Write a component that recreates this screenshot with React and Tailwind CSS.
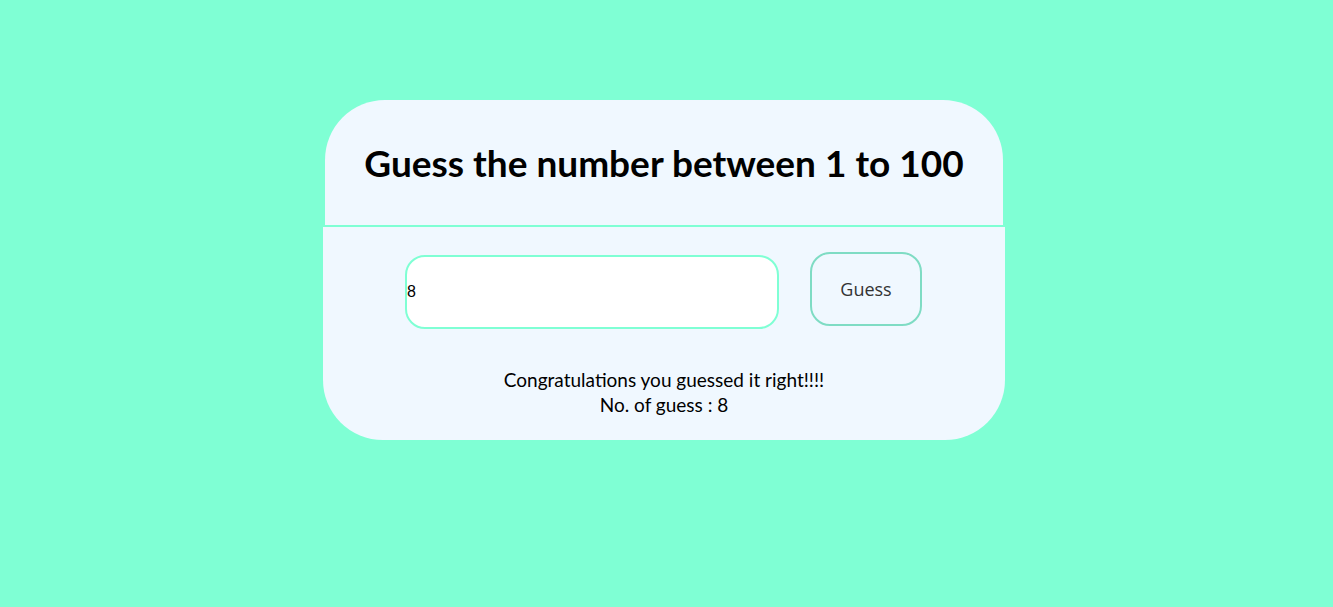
import React from 'react';

export default function App() {
  return (
    <div className="flex min-h-screen w-full justify-center bg-[#7fffd4] pr-[5px] pt-[100px] font-['Lato',sans-serif]">
      <div className="w-[682px]">
        <div className="mx-[2px] flex h-[125px] items-center justify-center rounded-t-[60px] bg-[#f0f8ff]">
          <h1 className="text-[37px] font-bold text-black">Guess the number between 1 to 100</h1>
        </div>
        <div className="mt-[2px] flex h-[213px] flex-col items-center rounded-b-[60px] bg-[#f0f8ff]">
          <div className="mt-[25px] flex items-start gap-[31px] pr-[1px]">
            <input
              type="text"
              defaultValue="8"
              className="mt-[3px] h-[74px] w-[374px] rounded-[20px] border-2 border-[#7fffd4] bg-white px-0 text-[16px] font-['Liberation_Sans',sans-serif] text-black outline-none"
            />
            <button className="h-[74px] w-[112px] rounded-[20px] border-2 border-[#7fdcc4] bg-transparent text-[18px] font-medium font-['Open_Sans',sans-serif] text-[#333]">
              Guess
            </button>
          </div>
          <div className="mt-[38px] text-center text-[19px] leading-[25px] text-black">
            <p>Congratulations you guessed it right!!!!</p>
            <p>No. of guess : 8</p>
          </div>
        </div>
      </div>
    </div>
  );
}
